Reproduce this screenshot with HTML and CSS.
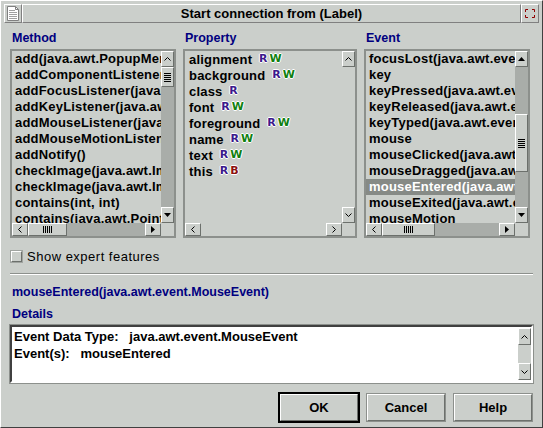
FILE: index.html
```html
<!DOCTYPE html>
<html lang="en">
<head>
  <meta charset="UTF-8" />
  <title>Start connection from (Label)</title>
  <link rel="stylesheet" href="styles.css">
</head>
<body>
  <div class="window">
    <div class="titlebar">
      <div class="sysmenu">
        <svg width="12" height="15" viewBox="0 0 12 15">
          <path d="M0.5 0.5 H8.5 L11.5 3.5 V14.5 H0.5 Z" fill="#fff" stroke="#808080"/>
          <path d="M8.5 0.5 V3.5 H11.5" fill="none" stroke="#808080"/>
          <path d="M2 4.5 H8 M2 6.5 H10 M2 8.5 H10 M2 10.5 H10 M2 12.5 H10" stroke="#a0a0a0"/>
        </svg>
      </div>
      <div class="title">Start connection from (Label)</div>
      <div class="maxbtn">
        <svg width="10" height="9" viewBox="0 0 10 9">
          <path d="M0.5 3 V0.5 H3 M7 0.5 H9.5 V3 M9.5 6 V8.5 H7 M3 8.5 H0.5 V6" fill="none" stroke="#900000"/>
        </svg>
      </div>
    </div>

    <div class="content">
      <div class="panes">
        <!-- methods of the source bean -->
        <div class="pane">
          <div class="label">Method</div>
          <div class="listbox">
            <ul class="items">
              <li>add(java.awt.PopupMenu)</li>
              <li>addComponentListener(java.awt.event.ComponentListener)</li>
              <li>addFocusListener(java.awt.event.FocusListener)</li>
              <li>addKeyListener(java.awt.event.KeyListener)</li>
              <li>addMouseListener(java.awt.event.MouseListener)</li>
              <li>addMouseMotionListener(java.awt.event.MouseMotionListener)</li>
              <li>addNotify()</li>
              <li>checkImage(java.awt.Image, java.awt.image.ImageObserver)</li>
              <li>checkImage(java.awt.Image, int, int, java.awt.image.ImageObserver)</li>
              <li>contains(int, int)</li>
              <li>contains(java.awt.Point)</li>
            </ul>
            <div class="vscroll">
              <div class="sb-btn"><svg width="7" height="4"><polyline points="0.5,3.5 3.5,0.5 6.5,3.5" fill="none" stroke="#000"/></svg></div>
              <div class="track">
                <div class="thumb v-thumb top-thumb"><svg width="7" height="9"><path d="M0 0.5 H7 M0 2.5 H7 M0 4.5 H7 M0 6.5 H7 M0 8.5 H7" stroke="#000"/></svg></div>
              </div>
              <div class="sb-btn"><svg width="7" height="4"><polygon points="0,0 7,0 3.5,4"/></svg></div>
            </div>
            <div class="hscroll">
              <div class="sb-btn"><svg width="4" height="7"><polyline points="3.5,0.5 0.5,3.5 3.5,6.5" fill="none" stroke="#000"/></svg></div>
              <div class="track">
                <div class="thumb h-thumb method-thumb"><svg width="9" height="7"><path d="M0.5 0 V7 M2.5 0 V7 M4.5 0 V7 M6.5 0 V7 M8.5 0 V7" stroke="#000"/></svg></div>
              </div>
              <div class="sb-btn"><svg width="4" height="7"><polygon points="0,0 4,3.5 0,7"/></svg></div>
            </div>
            <div class="corner"></div>
          </div>
        </div>

        <!-- properties with read / write / bound flags -->
        <div class="pane">
          <div class="label">Property</div>
          <div class="listbox">
            <ul class="items props">
              <li>alignment <span class="acc r">R</span><span class="acc w">W</span></li>
              <li>background <span class="acc r">R</span><span class="acc w">W</span></li>
              <li>class <span class="acc r">R</span></li>
              <li>font <span class="acc r">R</span><span class="acc w">W</span></li>
              <li>foreground <span class="acc r">R</span><span class="acc w">W</span></li>
              <li>name <span class="acc r">R</span><span class="acc w">W</span></li>
              <li>text <span class="acc r">R</span><span class="acc w">W</span></li>
              <li>this <span class="acc r">R</span><span class="acc b">B</span></li>
            </ul>
            <div class="vscroll">
              <div class="sb-btn"><svg width="7" height="4"><polyline points="0.5,3.5 3.5,0.5 6.5,3.5" fill="none" stroke="#000"/></svg></div>
              <div class="track off"></div>
              <div class="sb-btn"><svg width="7" height="4"><polyline points="0.5,0.5 3.5,3.5 6.5,0.5" fill="none" stroke="#000"/></svg></div>
            </div>
            <div class="hscroll">
              <div class="sb-btn"><svg width="4" height="7"><polyline points="3.5,0.5 0.5,3.5 3.5,6.5" fill="none" stroke="#000"/></svg></div>
              <div class="track off"></div>
              <div class="sb-btn"><svg width="4" height="7"><polyline points="0.5,0.5 3.5,3.5 0.5,6.5" fill="none" stroke="#000"/></svg></div>
            </div>
            <div class="corner"></div>
          </div>
        </div>

        <!-- events fired by the source bean -->
        <div class="pane">
          <div class="label">Event</div>
          <div class="listbox">
            <ul class="items">
              <li>focusLost(java.awt.event.FocusEvent)</li>
              <li>key</li>
              <li>keyPressed(java.awt.event.KeyEvent)</li>
              <li>keyReleased(java.awt.event.KeyEvent)</li>
              <li>keyTyped(java.awt.event.KeyEvent)</li>
              <li>mouse</li>
              <li>mouseClicked(java.awt.event.MouseEvent)</li>
              <li>mouseDragged(java.awt.event.MouseEvent)</li>
              <li class="selected">mouseEntered(java.awt.event.MouseEvent)</li>
              <li>mouseExited(java.awt.event.MouseEvent)</li>
              <li>mouseMotion</li>
            </ul>
            <div class="vscroll">
              <div class="sb-btn"><svg width="7" height="4"><polygon points="0,4 3.5,0 7,4"/></svg></div>
              <div class="track">
                <div class="thumb v-thumb event-thumb"><svg width="7" height="9"><path d="M0 0.5 H7 M0 2.5 H7 M0 4.5 H7 M0 6.5 H7 M0 8.5 H7" stroke="#000"/></svg></div>
              </div>
              <div class="sb-btn"><svg width="7" height="4"><polygon points="0,0 7,0 3.5,4"/></svg></div>
            </div>
            <div class="hscroll">
              <div class="sb-btn"><svg width="4" height="7"><polyline points="3.5,0.5 0.5,3.5 3.5,6.5" fill="none" stroke="#000"/></svg></div>
              <div class="track">
                <div class="thumb h-thumb event-hthumb"><svg width="9" height="7"><path d="M0.5 0 V7 M2.5 0 V7 M4.5 0 V7 M6.5 0 V7 M8.5 0 V7" stroke="#000"/></svg></div>
              </div>
              <div class="sb-btn"><svg width="4" height="7"><polygon points="0,0 4,3.5 0,7"/></svg></div>
            </div>
            <div class="corner"></div>
          </div>
        </div>
      </div>

      <div class="check"><span class="box"></span>Show expert features</div>
      <div class="separator"></div>
      <div class="signature">mouseEntered(java.awt.event.MouseEvent)</div>
      <div class="label details-label">Details</div>

      <div class="details">
        <div class="details-text">
          <div>Event Data Type:&nbsp;&nbsp; java.awt.event.MouseEvent</div>
          <div>Event(s):&nbsp;&nbsp; mouseEntered</div>
        </div>
        <div class="vscroll">
          <div class="sb-btn"><svg width="7" height="4"><polyline points="0.5,3.5 3.5,0.5 6.5,3.5" fill="none" stroke="#000"/></svg></div>
          <div class="track off"></div>
          <div class="sb-btn"><svg width="7" height="4"><polyline points="0.5,0.5 3.5,3.5 6.5,0.5" fill="none" stroke="#000"/></svg></div>
        </div>
      </div>

      <div class="buttons">
        <button class="btn default">OK</button>
        <button class="btn">Cancel</button>
        <button class="btn">Help</button>
      </div>
    </div>
  </div>
</body>
</html>
```

FILE: styles.css
```css
body {
  margin: 0;
  background: #cbcfcb;
  font-family: "Liberation Sans", Arial, sans-serif;
}

.window {
  width: 543px;
  height: 428px;
  box-sizing: border-box;
  background: #cbcfcb;
  border: 1px solid;
  border-color: #ffffff #404040 #404040 #ffffff;
  padding: 2px;
}

.window > * {
  margin-left: 1px;
  margin-right: 1px;
}

/* title bar */
.titlebar {
  display: flex;
  height: 19px;
  margin-top: 1px;
}

.sysmenu,
.maxbtn {
  width: 18px;
  box-sizing: border-box;
  display: flex;
  align-items: center;
  justify-content: center;
  border: 1px solid;
  border-color: #ffffff #808080 #808080 #ffffff;
}

.title {
  flex: 1;
  text-align: center;
  font-weight: bold;
  font-size: 13px;
  line-height: 17px;
  border: 1px solid;
  border-color: #ffffff #808080 #808080 #ffffff;
}

.content {
  padding: 0 6px 0 6px;
}

/* three list panes */
.panes {
  display: grid;
  grid-template-columns: 166px 174px 166px;
  column-gap: 7px;
  padding-top: 7px;
}

.label {
  color: #000080;
  font-weight: bold;
  font-size: 12.5px;
  line-height: 16px;
  padding-left: 2px;
  margin-bottom: 3px;
}

.listbox {
  height: 189px;
  box-sizing: border-box;
  border: 2px solid #8c908c;
  display: grid;
  grid-template-columns: 1fr 13px;
  grid-template-rows: 1fr 13px;
}

.items {
  margin: 0;
  padding: 0;
  list-style: none;
  overflow: hidden;
  font-weight: bold;
  font-size: 13px;
  letter-spacing: 0.2px;
}

.items li {
  height: 16px;
  line-height: 16px;
  padding-left: 3px;
  white-space: nowrap;
}

.items li.selected {
  background: #868a86;
  color: #ffffff;
}

.props li {
  padding-left: 4px;
}

.acc {
  font-family: "DejaVu Sans", sans-serif;
  font-weight: bold;
  font-size: 11px;
  letter-spacing: 0;
  vertical-align: 2px;
  text-shadow: 1px 0 #fff, -1px 0 #fff, 0 1px #fff, 0 -1px #fff;
}

.acc.r { color: #3c1a8c; margin-left: 3px; }
.acc.w { color: #108010; margin-left: 2px; }
.acc.b { color: #8c1010; margin-left: 2px; }

/* scroll bars */
.vscroll {
  display: flex;
  flex-direction: column;
}

.hscroll {
  display: flex;
}

.sb-btn {
  flex: none;
  width: 13px;
  height: 16px;
  box-sizing: border-box;
  display: flex;
  align-items: center;
  justify-content: center;
  background: #cbcfcb;
  border: 1px solid;
  border-color: #ffffff #6c706c #6c706c #ffffff;
}

.hscroll .sb-btn {
  width: 16px;
  height: 13px;
}

.track {
  flex: 1;
  background: #a9ada9;
  position: relative;
}

.track.off {
  background: #cbcfcb;
}

.thumb {
  position: absolute;
  box-sizing: border-box;
  display: flex;
  align-items: center;
  justify-content: center;
  background: #cbcfcb;
  border: 1px solid;
  border-color: #ffffff #6c706c #6c706c #ffffff;
}

.v-thumb { left: 0; right: 0; }
.h-thumb { top: 0; bottom: 0; }

.top-thumb { top: 0; height: 20px; }
.event-thumb { top: 47px; height: 58px; }
.method-thumb { left: 0; width: 39px; }
.event-hthumb { left: 0; width: 53px; }

.corner {
  background: #cbcfcb;
}

/* expert toggle */
.check {
  display: flex;
  align-items: center;
  margin-top: 10px;
  height: 16px;
  font-size: 13px;
  letter-spacing: 0.5px;
}

.check .box {
  width: 11px;
  height: 11px;
  box-sizing: border-box;
  margin: 0 5px 0 1px;
  border: 1px solid;
  border-color: #ffffff #6c706c #6c706c #ffffff;
  box-shadow: 0 0 0 1px #a0a4a0;
}

.separator {
  margin-top: 9px;
  border-top: 1px solid #8c908c;
  border-bottom: 1px solid #ffffff;
  height: 0;
}

.signature {
  margin-top: 9px;
  color: #000080;
  font-weight: bold;
  font-size: 12.5px;
  line-height: 16px;
  padding-left: 2px;
}

.details-label {
  margin-top: 6px;
}

/* details text area */
.details {
  height: 58px;
  box-sizing: border-box;
  border: 2px solid;
  border-color: #404040 #ffffff #ffffff #404040;
  box-shadow: 0 0 0 1px #8c908c;
  background: #ffffff;
  display: flex;
}

.details-text {
  flex: 1;
  padding: 1px 2px;
  font-weight: bold;
  font-size: 13px;
  line-height: 17px;
}

.details .vscroll {
  width: 13px;
  padding: 1px 0;
  background: #ffffff;
}

.details .sb-btn {
  height: 17px;
}

/* dialog buttons */
.buttons {
  display: flex;
  justify-content: flex-end;
  gap: 9px;
  margin-top: 11px;
  padding-right: 1px;
}

.btn {
  width: 78px;
  height: 27px;
  box-sizing: border-box;
  background: #cbcfcb;
  font-family: "Liberation Sans", Arial, sans-serif;
  font-weight: bold;
  font-size: 13px;
  color: #000;
  border: 1px solid;
  border-color: #ffffff #6c706c #6c706c #ffffff;
  box-shadow: 0 0 0 1px #8c908c;
  padding: 0;
}

.btn.default {
  box-shadow: 0 0 0 2px #000;
}
```
